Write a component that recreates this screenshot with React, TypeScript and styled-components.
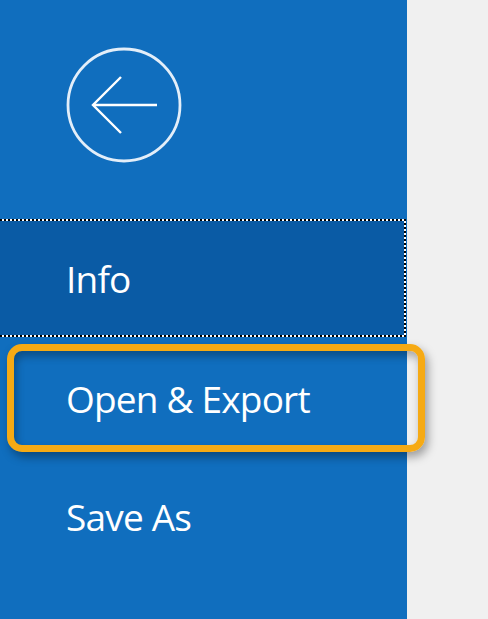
import React from 'react';
import styled, { createGlobalStyle } from 'styled-components';

const GlobalStyle = createGlobalStyle`
  html, body {
    margin: 0;
    padding: 0;
    height: 100%;
    overflow: hidden;
  }
  #root {
    height: 100%;
  }
`;

const Page = styled.div`
  display: flex;
  height: 100vh;
  background: #f0f0f0;
  font-family: 'Open Sans', 'Noto Sans', sans-serif;
`;

const Sidebar = styled.nav`
  position: relative;
  z-index: 1;
  width: 407px;
  flex-shrink: 0;
  background: #106ebe;
  display: flex;
  flex-direction: column;
`;

const BackArea = styled.div`
  height: 219px;
  padding: 47px 0 0 66px;
  box-sizing: border-box;
`;

const BackButton = styled.button`
  width: 116px;
  height: 116px;
  padding: 0;
  border: none;
  background: transparent;
  cursor: pointer;
  svg {
    display: block;
  }
`;

const dots = (dir: string) =>
  `repeating-linear-gradient(${dir}, #000 0 2px, #fff 2px 4px)`;

const NavItem = styled.div<{ $selected?: boolean; $highlight?: boolean }>`
  box-sizing: border-box;
  display: flex;
  align-items: center;
  padding-left: 66px;
  height: 118px;
  color: #fff;
  font-size: 37px;
  letter-spacing: -0.8px;
  ${(p) =>
    p.$selected &&
    `
    width: 406px;
    background:
      ${dots('90deg')} top / 100% 2px no-repeat,
      ${dots('90deg')} bottom / 100% 2px no-repeat,
      ${dots('180deg')} right / 2px 100% no-repeat,
      #0a5ba5;
  `}
  ${(p) =>
    p.$highlight &&
    `
    margin: 7px 0 0 7px;
    width: 418px;
    height: 108px;
    padding-left: 52px;
    border: 7px solid #f6aa14;
    border-radius: 15px;
    box-shadow: 3px 5px 10px rgba(0, 0, 0, 0.35),
      inset 2px 5px 9px rgba(0, 0, 0, 0.3);
  `}
`;

const SaveItem = styled(NavItem)`
  margin-top: 6px;
  height: 116px;
`;

const Content = styled.main`
  flex: 1;
  background: #f0f0f0;
`;

const BackIcon = () => (
  <svg width="116" height="116" viewBox="0 0 116 116">
    <circle cx="58" cy="58" r="56" fill="none" stroke="#e3eef9" strokeWidth="2.8" />
    <line x1="27" y1="58" x2="91" y2="58" stroke="#fff" strokeWidth="2.4" />
    <polyline points="55,30 27,58 55,86" fill="none" stroke="#fff" strokeWidth="2.4" />
  </svg>
);

const App = () => {
  return (
    <>
      <GlobalStyle />
      <Page>
        <Sidebar>
          <BackArea>
            <BackButton aria-label="Back">
              <BackIcon />
            </BackButton>
          </BackArea>
          <NavItem $selected>Info</NavItem>
          <NavItem $highlight>Open &amp; Export</NavItem>
          <SaveItem>Save As</SaveItem>
        </Sidebar>
        <Content />
      </Page>
    </>
  );
};

export default App;
